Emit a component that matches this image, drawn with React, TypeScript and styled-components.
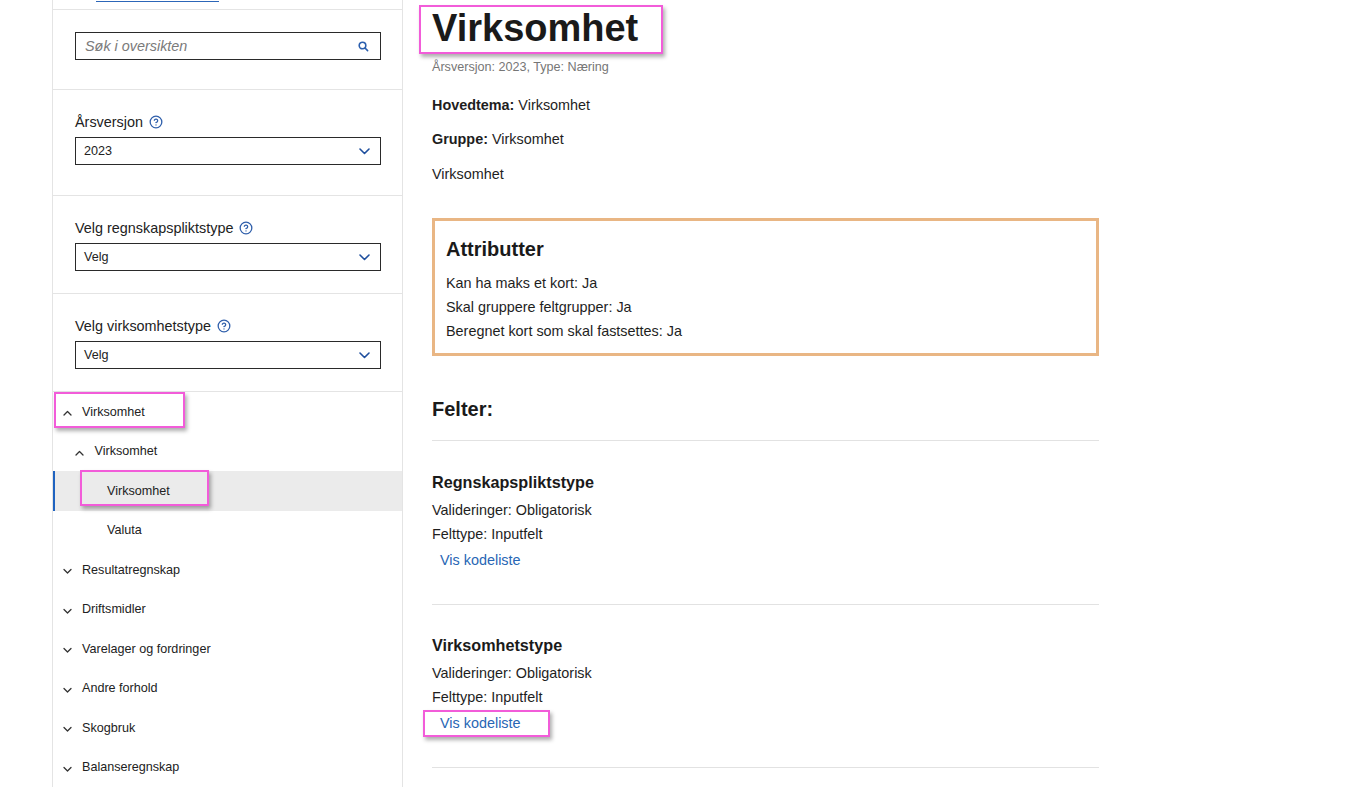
import React from "react";
import styled, { createGlobalStyle } from "styled-components";

const GlobalStyle = createGlobalStyle`
  html, body { margin: 0; padding: 0; background: #fff; overflow: hidden; }
  body { font-family: "Liberation Sans", Arial, Helvetica, sans-serif; color: #1e1e1e; }
  * { box-sizing: border-box; }
`;

const Page = styled.div`
  display: flex;
  align-items: stretch;
  padding-left: 52px;
  height: 787px;
  overflow: hidden;
`;

const Sidebar = styled.aside`
  width: 351px;
  flex: none;
  border-left: 1px solid #e4e4e4;
  border-right: 1px solid #e4e4e4;
  display: flex;
  flex-direction: column;
`;

const TopSection = styled.div`
  height: 29px;
  border-bottom: 1px solid #e4e4e4;
  padding: 1px 0 0 43px;
`;

const TopUnderline = styled.div`
  width: 123px;
  height: 1px;
  background: #2c66b8;
`;

const Section = styled.div<{ $pb: number }>`
  padding: 22px 21px ${(p) => p.$pb}px 22px;
  border-bottom: 1px solid #e4e4e4;
  display: flex;
  flex-direction: column;
`;

const Label = styled.div`
  font-size: 14.4px;
  line-height: 20px;
  color: #222;
  display: flex;
  align-items: center;
  gap: 6px;
  margin-bottom: 5px;
`;

const SearchBox = styled.div`
  height: 28px;
  border: 1px solid #2a2a2a;
  display: flex;
  align-items: center;
  padding: 0 11px 0 9px;
`;

const SearchInput = styled.input`
  flex: 1;
  border: none;
  outline: none;
  background: transparent;
  font-family: inherit;
  font-size: 14.4px;
  font-style: italic;
  color: #222;
  padding: 0;
  &::placeholder {
    color: #7a7a7a;
    font-style: italic;
  }
`;

const SelectBox = styled.div`
  height: 28px;
  border: 1px solid #2a2a2a;
  display: flex;
  align-items: center;
  justify-content: space-between;
  padding: 0 10px 0 8px;
  font-size: 12.6px;
  color: #222;
`;

const Tree = styled.nav`
  display: flex;
  flex-direction: column;
`;

const TreeRow = styled.div<{ $level: number; $selected?: boolean }>`
  position: relative;
  height: 39.5px;
  flex: none;
  display: flex;
  align-items: center;
  padding-left: ${(p) => 6 + p.$level * 12.5}px;
  font-size: 12.6px;
  color: #222;
  background: ${(p) => (p.$selected ? "#ebebeb" : "transparent")};
  box-shadow: ${(p) => (p.$selected ? "inset 2px 0 0 #1f63c0" : "none")};
`;

const ChevronSlot = styled.span`
  width: 16px;
  margin-right: 7px;
  display: flex;
  justify-content: center;
  align-items: center;
  padding-top: 3px;
  flex: none;
`;

const Highlight = styled.span<{ $l: number; $t: number; $w: number; $h: number }>`
  position: absolute;
  left: ${(p) => p.$l}px;
  top: ${(p) => p.$t}px;
  width: ${(p) => p.$w}px;
  height: ${(p) => p.$h}px;
  border: 2px solid #f25cd9;
  box-shadow: 2px 3px 4px rgba(0, 0, 0, 0.32);
  pointer-events: none;
`;

const Main = styled.main`
  margin-left: 29px;
  width: 667px;
  flex: none;
  padding-top: 6px;
  display: flex;
  flex-direction: column;
`;

const TitleWrap = styled.div`
  position: relative;
  align-self: flex-start;
`;

const Title = styled.h1`
  margin: 0;
  font-size: 38px;
  line-height: 44px;
  font-weight: 700;
  color: #1a1a1a;
`;

const Subtitle = styled.div`
  margin-top: 8px;
  font-size: 12.6px;
  line-height: 18px;
  color: #767676;
`;

const InfoLine = styled.div<{ $mt: number }>`
  margin-top: ${(p) => p.$mt}px;
  font-size: 14.4px;
  line-height: 20px;
  color: #1e1e1e;
  b {
    font-weight: 700;
  }
`;

const AttrBox = styled.section`
  margin-top: 34px;
  border: 3px solid #e9b684;
  padding: 16px 11px 10px;
`;

const BoxHeading = styled.h3`
  margin: 0 0 10px;
  font-size: 20px;
  line-height: 24px;
  font-weight: 700;
  color: #1a1a1a;
`;

const BodyLine = styled.div`
  font-size: 14.4px;
  line-height: 24px;
  color: #1e1e1e;
`;

const SectionHeading = styled.h2`
  margin: 41px 0 0;
  font-size: 20px;
  line-height: 24px;
  font-weight: 700;
  color: #1a1a1a;
`;

const Divider = styled.hr<{ $mt: number }>`
  margin: ${(p) => p.$mt}px 0 0;
  border: none;
  height: 1px;
  background: #e2e2e2;
`;

const Field = styled.div`
  padding-top: 29.5px;
  display: flex;
  flex-direction: column;
`;

const FieldTitle = styled.h4`
  margin: 0 0 5px;
  font-size: 16.2px;
  line-height: 22px;
  font-weight: 700;
  color: #1a1a1a;
`;

const LinkWrap = styled.div`
  position: relative;
  margin-top: 2px;
  padding-left: 8px;
  line-height: 24px;
`;

const Link = styled.a`
  font-size: 14.4px;
  color: #2866b4;
  text-decoration: none;
  cursor: pointer;
`;

const HelpIcon = () => (
  <svg width="14" height="14" viewBox="0 0 24 24" fill="none" stroke="#2f5fab" strokeWidth="2.2" strokeLinecap="round" strokeLinejoin="round">
    <circle cx="12" cy="12" r="10" />
    <path d="M9.09 9a3 3 0 0 1 5.83 1c0 2-3 3-3 3" />
    <path d="M12 17h.01" />
  </svg>
);

const SearchIcon = () => (
  <svg width="11" height="11" viewBox="0 0 11 11" fill="none" stroke="#2b5fae" strokeWidth="1.6" strokeLinecap="round">
    <circle cx="4.5" cy="4.5" r="3.3" />
    <path d="M7 7 L9.6 9.6" />
  </svg>
);

const SelectChevron = () => (
  <svg width="11" height="7" viewBox="0 0 11 7" fill="none" stroke="#1f4f9e" strokeWidth="1.6" strokeLinecap="round" strokeLinejoin="round">
    <path d="M1 1 L5.5 5.5 L10 1" />
  </svg>
);

const TreeChevron = ({ up }: { up: boolean }) => (
  <svg width="9" height="6" viewBox="0 0 9 6" fill="none" stroke="#333" strokeWidth="1.3" strokeLinecap="round" strokeLinejoin="round">
    {up ? <path d="M1 5 L4.5 1.5 L8 5" /> : <path d="M1 1.5 L4.5 5 L8 1.5" />}
  </svg>
);

type TreeItem = {
  label: string;
  level: number;
  chevron?: "up" | "down";
  selected?: boolean;
  hl?: { l: number; t: number; w: number; h: number };
};

const treeItems: TreeItem[] = [
  { label: "Virksomhet", level: 0, chevron: "up", hl: { l: 1, t: 0, w: 131, h: 36 } },
  { label: "Virksomhet", level: 1, chevron: "up" },
  { label: "Virksomhet", level: 2, selected: true, hl: { l: 27, t: -1, w: 129, h: 36 } },
  { label: "Valuta", level: 2 },
  { label: "Resultatregnskap", level: 0, chevron: "down" },
  { label: "Driftsmidler", level: 0, chevron: "down" },
  { label: "Varelager og fordringer", level: 0, chevron: "down" },
  { label: "Andre forhold", level: 0, chevron: "down" },
  { label: "Skogbruk", level: 0, chevron: "down" },
  { label: "Balanseregnskap", level: 0, chevron: "down" },
];

type FieldData = { title: string; validering: string; felttype: string; hl?: boolean };

const fields: FieldData[] = [
  { title: "Regnskapspliktstype", validering: "Obligatorisk", felttype: "Inputfelt" },
  { title: "Virksomhetstype", validering: "Obligatorisk", felttype: "Inputfelt", hl: true },
];

const selects = [
  { label: "Årsversjon", value: "2023", pb: 30 },
  { label: "Velg regnskapspliktstype", value: "Velg", pb: 22 },
  { label: "Velg virksomhetstype", value: "Velg", pb: 22 },
];

export default function App() {
  return (
    <>
      <GlobalStyle />
      <Page>
        <Sidebar>
          <TopSection>
            <TopUnderline />
          </TopSection>
          <Section $pb={29}>
            <SearchBox>
              <SearchInput placeholder="Søk i oversikten" />
              <SearchIcon />
            </SearchBox>
          </Section>
          {selects.map((s) => (
            <Section key={s.label} $pb={s.pb}>
              <Label>
                {s.label}
                <HelpIcon />
              </Label>
              <SelectBox>
                <span>{s.value}</span>
                <SelectChevron />
              </SelectBox>
            </Section>
          ))}
          <Tree>
            {treeItems.map((it, i) => (
              <TreeRow key={i} $level={it.level} $selected={it.selected}>
                <ChevronSlot>{it.chevron && <TreeChevron up={it.chevron === "up"} />}</ChevronSlot>
                <span>{it.label}</span>
                {it.hl && <Highlight $l={it.hl.l} $t={it.hl.t} $w={it.hl.w} $h={it.hl.h} />}
              </TreeRow>
            ))}
          </Tree>
        </Sidebar>
        <Main>
          <TitleWrap>
            <Title>Virksomhet</Title>
            <Highlight $l={-13} $t={-1} $w={244} $h={49} />
          </TitleWrap>
          <Subtitle>Årsversjon: 2023, Type: Næring</Subtitle>
          <InfoLine $mt={19}>
            <b>Hovedtema:</b> Virksomhet
          </InfoLine>
          <InfoLine $mt={14}>
            <b>Gruppe:</b> Virksomhet
          </InfoLine>
          <InfoLine $mt={15}>Virksomhet</InfoLine>
          <AttrBox>
            <BoxHeading>Attributter</BoxHeading>
            <BodyLine>Kan ha maks et kort: Ja</BodyLine>
            <BodyLine>Skal gruppere feltgrupper: Ja</BodyLine>
            <BodyLine>Beregnet kort som skal fastsettes: Ja</BodyLine>
          </AttrBox>
          <SectionHeading>Felter:</SectionHeading>
          <Divider $mt={19} />
          {fields.map((f) => (
            <React.Fragment key={f.title}>
              <Field>
                <FieldTitle>{f.title}</FieldTitle>
                <BodyLine>Valideringer: {f.validering}</BodyLine>
                <BodyLine>Felttype: {f.felttype}</BodyLine>
                <LinkWrap>
                  <Link>Vis kodeliste</Link>
                  {f.hl && <Highlight $l={-9} $t={-1} $w={127} $h={27} />}
                </LinkWrap>
              </Field>
              <Divider $mt={32} />
            </React.Fragment>
          ))}
        </Main>
      </Page>
    </>
  );
}
